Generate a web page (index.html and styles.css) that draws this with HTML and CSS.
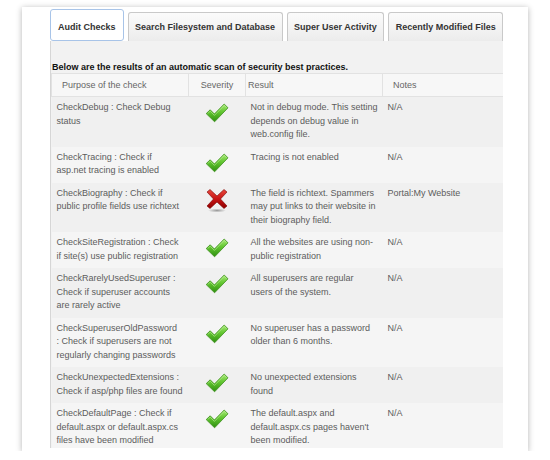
FILE: index.html
```html
<!DOCTYPE html>
<html>
<head>
<meta charset="utf-8">
<link rel="stylesheet" href="styles.css">
</head>
<body>
<div class="card">
  <div class="tabs">
    <div class="tab active">Audit Checks</div>
    <div class="tab">Search Filesystem and Database</div>
    <div class="tab">Super User Activity</div>
    <div class="tab">Recently Modified Files</div>
  </div>
  <div class="panel">
    <p class="intro">Below are the results of an automatic scan of security best practices.</p>
    <table class="results">
      <colgroup>
        <col class="c-purpose"><col class="c-sev"><col class="c-result"><col class="c-notes">
      </colgroup>
      <thead>
        <tr><th>Purpose of the check</th><th class="th-sev">Severity</th><th class="th-result">Result</th><th>Notes</th></tr>
      </thead>
      <tbody>
        <tr>
          <td>CheckDebug : Check Debug status</td>
          <td class="sev"><svg class="ok" viewBox="0 0 24 20" width="24" height="20"><use href="#tick"/></svg></td>
          <td class="res">Not in debug mode. This setting depends on debug value in web.config file.</td>
          <td>N/A</td>
        </tr>
        <tr>
          <td>CheckTracing : Check if asp.net tracing is enabled</td>
          <td class="sev"><svg class="ok" viewBox="0 0 24 20" width="24" height="20"><use href="#tick"/></svg></td>
          <td class="res">Tracing is not enabled</td>
          <td>N/A</td>
        </tr>
        <tr>
          <td>CheckBiography : Check if public profile fields use richtext</td>
          <td class="sev"><svg class="fail" viewBox="0 0 22 24" width="22" height="24"><use href="#cross"/></svg></td>
          <td class="res">The field is richtext. Spammers may put links to their website in their biography field.</td>
          <td>Portal:My Website</td>
        </tr>
        <tr>
          <td>CheckSiteRegistration : Check if site(s) use public registration</td>
          <td class="sev"><svg class="ok" viewBox="0 0 24 20" width="24" height="20"><use href="#tick"/></svg></td>
          <td class="res">All the websites are using non-public registration</td>
          <td>N/A</td>
        </tr>
        <tr>
          <td>CheckRarelyUsedSuperuser : Check if superuser accounts are rarely active</td>
          <td class="sev"><svg class="ok" viewBox="0 0 24 20" width="24" height="20"><use href="#tick"/></svg></td>
          <td class="res">All superusers are regular<br>users of the system.</td>
          <td>N/A</td>
        </tr>
        <tr>
          <td>CheckSuperuserOldPassword<br>: Check if superusers are not regularly changing passwords</td>
          <td class="sev"><svg class="ok" viewBox="0 0 24 20" width="24" height="20"><use href="#tick"/></svg></td>
          <td class="res">No superuser has a password older than 6 months.</td>
          <td>N/A</td>
        </tr>
        <tr>
          <td>CheckUnexpectedExtensions : Check if asp/php files are found</td>
          <td class="sev"><svg class="ok" viewBox="0 0 24 20" width="24" height="20"><use href="#tick"/></svg></td>
          <td class="res">No unexpected extensions found</td>
          <td>N/A</td>
        </tr>
        <tr>
          <td>CheckDefaultPage : Check if default.aspx or default.aspx.cs files have been modified</td>
          <td class="sev"><svg class="ok" viewBox="0 0 24 20" width="24" height="20"><use href="#tick"/></svg></td>
          <td class="res">The default.aspx and default.aspx.cs pages haven't been modified.</td>
          <td>N/A</td>
        </tr>
      </tbody>
    </table>
  </div>
</div>

<svg class="defs" width="0" height="0" aria-hidden="true">
  <defs>
    <linearGradient id="gGreen" x1="0" y1="0" x2="0" y2="1">
      <stop offset="0" stop-color="#a6ea74"/>
      <stop offset="0.45" stop-color="#62c630"/>
      <stop offset="1" stop-color="#2e8e10"/>
    </linearGradient>
    <linearGradient id="gRed" x1="0" y1="0" x2="0" y2="1">
      <stop offset="0" stop-color="#e84a3e"/>
      <stop offset="0.5" stop-color="#c81414"/>
      <stop offset="1" stop-color="#8e0000"/>
    </linearGradient>
    <radialGradient id="gShadow" cx="0.5" cy="0.5" r="0.5">
      <stop offset="0" stop-color="#9a9a9a"/>
      <stop offset="1" stop-color="#9a9a9a" stop-opacity="0"/>
    </radialGradient>
    <symbol id="tick" viewBox="0 0 24 20">
      <path d="M1.2 10.6 L5.2 6.8 L9.4 11 L19.2 1 L23 4.8 L9.6 18.8 Z" fill="url(#gGreen)" stroke="#3c8f1c" stroke-width="0.8" stroke-linejoin="round"/>
      <path d="M2.6 10.6 L5.2 8.2 L9.4 12.4 L19.2 2.4 L21.4 4.6" fill="none" stroke="#d6f7b8" stroke-opacity="0.6" stroke-width="0.8"/>
    </symbol>
    <symbol id="cross" viewBox="0 0 22 24">
      <ellipse cx="11" cy="21.5" rx="9" ry="2" fill="url(#gShadow)"/>
      <path d="M1 3 L4 0.5 L11 7 L18 0.5 L21 3 L14.5 10 L21 17 L18 19.5 L11 13 L4 19.5 L1 17 L7.5 10 Z" fill="url(#gRed)" stroke="#7a0000" stroke-width="0.6" stroke-linejoin="round"/>
    </symbol>
  </defs>
</svg>
</body>
</html>
```

FILE: styles.css
```css
html, body {
  margin: 0;
  padding: 0;
  background: #ffffff;
}

body {
  font-family: "Liberation Sans", Arial, sans-serif;
  font-size: 9px;
  color: #5a5a5a;
}

.defs {
  position: absolute;
  width: 0;
  height: 0;
  overflow: hidden;
}

.card {
  margin: 7px 0 0 22px;
  width: 506px;
  height: 444px;
  box-sizing: border-box;
  padding: 2px 0 3px 28px;
  background: #ffffff;
  box-shadow: 0 1px 6px rgba(0, 0, 0, 0.3);
  display: flex;
  flex-direction: column;
}

.tabs {
  display: flex;
  align-items: flex-end;
  gap: 4px;
  height: 32px;
  flex: none;
}

.tab {
  height: 29px;
  box-sizing: border-box;
  padding: 0 6.5px;
  display: flex;
  align-items: center;
  font-weight: bold;
  color: #333333;
  white-space: nowrap;
  border: 1px solid #c9c9c9;
  border-bottom: none;
  border-radius: 3px 3px 0 0;
  background: linear-gradient(#fbfbfb, #ececec);
}

.tab.active {
  height: 32px;
  padding: 3px 7px 0;
  border: 1px solid #a8c4e8;
  border-radius: 3px;
  background: #ffffff;
}

.panel {
  flex: 1;
  min-height: 0;
  overflow: hidden;
  width: 453px;
  box-sizing: border-box;
  background: #f2f2f2;
  border-left: 1px solid #d6d6d6;
  padding-top: 20px;
}

.intro {
  margin: 0;
  font-weight: bold;
  line-height: 12px;
  color: #111111;
  padding-left: 1px;
}

.results {
  width: 452px;
  border-collapse: collapse;
  table-layout: fixed;
}

.c-purpose { width: 137px; }
.c-sev { width: 57px; }
.c-result { width: 137px; }
.c-notes { width: 121px; }

.results th {
  font-weight: normal;
  text-align: left;
  color: #666666;
  background: #f7f7f7;
  border: 1px solid #e2e2e2;
  padding: 5px 10px;
  line-height: 12px;
}

.results th.th-sev {
  text-align: center;
  padding: 5px 0;
}

.results th.th-result {
  padding-left: 2px;
}

.results td {
  vertical-align: top;
  padding: 4px 5px 5px 5px;
  line-height: 13.5px;
  color: #5c5c5c;
}

.results td.res {
  padding-right: 4px;
}

.results tbody tr:nth-child(odd) td {
  background: #f0f0f0;
}

.results tbody tr:nth-child(even) td {
  background: #f5f5f5;
}

.results td.sev {
  padding: 6px 0 0;
  text-align: center;
}

.sev svg {
  display: block;
  margin: 0 auto;
}
```
